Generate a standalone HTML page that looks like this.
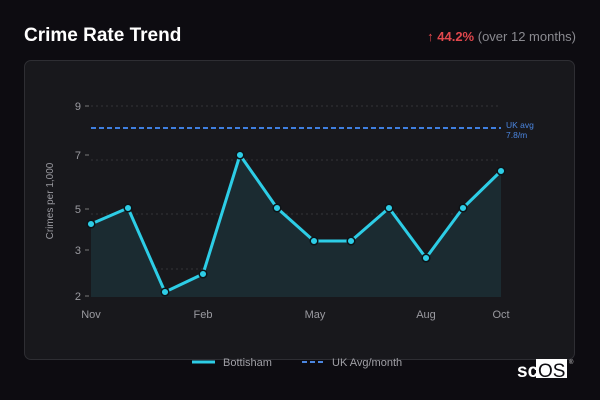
<!DOCTYPE html><html><head><style>
body{margin:0;width:600px;height:400px;background:#0d0c11;font-family:"Liberation Sans",sans-serif;overflow:hidden;position:relative}
.t{position:absolute;left:24px;top:25px;color:#fff;font-weight:bold;font-size:19px}
.r{position:absolute;right:24px;top:29px;font-size:13px;color:#8a8a90}
.r b{color:#e0474c}
.p{position:absolute;left:24px;top:60px;width:551px;height:300px;background:#18181c;border:1px solid #2e2e33;border-radius:7px;box-sizing:border-box}
</style></head><body>
<div class="t">Crime Rate Trend</div>
<div class="r"><b>↑ 44.2%</b> (over 12 months)</div>
<div class="p"></div>
<svg width="600" height="400" style="position:absolute;left:0;top:0" font-family="Liberation Sans,sans-serif">
<g stroke="#333338" stroke-dasharray="2 3" stroke-width="1">
<line x1="91" y1="106" x2="501" y2="106"/><line x1="91" y1="160" x2="501" y2="160"/><line x1="91" y1="214" x2="501" y2="214"/><line x1="91" y1="269" x2="501" y2="269"/></g>
<g fill="#9a9aa0" font-size="11" text-anchor="end">
<text x="81" y="110">9</text><text x="81" y="159">7</text><text x="81" y="213">5</text><text x="81" y="254">3</text><text x="81" y="300">2</text></g>
<g stroke="#777" stroke-width="1"><line x1="85" y1="106" x2="89" y2="106"/><line x1="85" y1="155" x2="89" y2="155"/><line x1="85" y1="209" x2="89" y2="209"/><line x1="85" y1="250" x2="89" y2="250"/><line x1="85" y1="296" x2="89" y2="296"/></g>
<text transform="translate(53,201) rotate(-90)" fill="#9a9aa0" font-size="10" text-anchor="middle">Crimes per 1,000</text>
<g fill="#9a9aa0" font-size="11" text-anchor="middle"><text x="91" y="318">Nov</text><text x="203" y="318">Feb</text><text x="315" y="318">May</text><text x="426" y="318">Aug</text><text x="501" y="318">Oct</text></g>
<path d="M91 224L128 208L165 292L203 274L240 155L277 208L314 241L351 241L389 208L426 258L463 208L501 171L501 297L91 297Z" fill="#1b2b31"/>
<line x1="91" y1="128" x2="501" y2="128" stroke="#3f7fe0" stroke-width="2" stroke-dasharray="5 3"/>
<text x="506" y="128" fill="#4b86e0" font-size="8.5">UK avg</text><text x="506" y="138" fill="#4b86e0" font-size="8.5">7.8/m</text>
<polyline points="91,224 128,208 165,292 203,274 240,155 277,208 314,241 351,241 389,208 426,258 463,208 501,171" fill="none" stroke="#2dcde6" stroke-width="3" stroke-linejoin="round"/>
<g fill="#2dcde6" stroke="#0d1418" stroke-width="1.5">
<circle cx="91" cy="224" r="3.8"/><circle cx="128" cy="208" r="3.8"/><circle cx="165" cy="292" r="3.8"/><circle cx="203" cy="274" r="3.8"/><circle cx="240" cy="155" r="3.8"/><circle cx="277" cy="208" r="3.8"/><circle cx="314" cy="241" r="3.8"/><circle cx="351" cy="241" r="3.8"/><circle cx="389" cy="208" r="3.8"/><circle cx="426" cy="258" r="3.8"/><circle cx="463" cy="208" r="3.8"/><circle cx="501" cy="171" r="3.8"/></g>
<line x1="192" y1="362" x2="215" y2="362" stroke="#2dcde6" stroke-width="3"/>
<text x="223" y="366" fill="#a0a0a6" font-size="11">Bottisham</text>
<line x1="302" y1="362" x2="325" y2="362" stroke="#4b86e0" stroke-width="2" stroke-dasharray="5 3"/>
<text x="332" y="366" fill="#a0a0a6" font-size="11">UK Avg/month</text>
<rect x="536" y="359" width="31" height="19" fill="#fff"/>
<text x="517" y="377" fill="#fff" font-size="19" font-weight="bold">sc</text>
<text x="538" y="377" fill="#0d0c11" font-size="19">OS</text>
<text x="569" y="364" fill="#ccc" font-size="6">®</text>
</svg>
</body></html>
